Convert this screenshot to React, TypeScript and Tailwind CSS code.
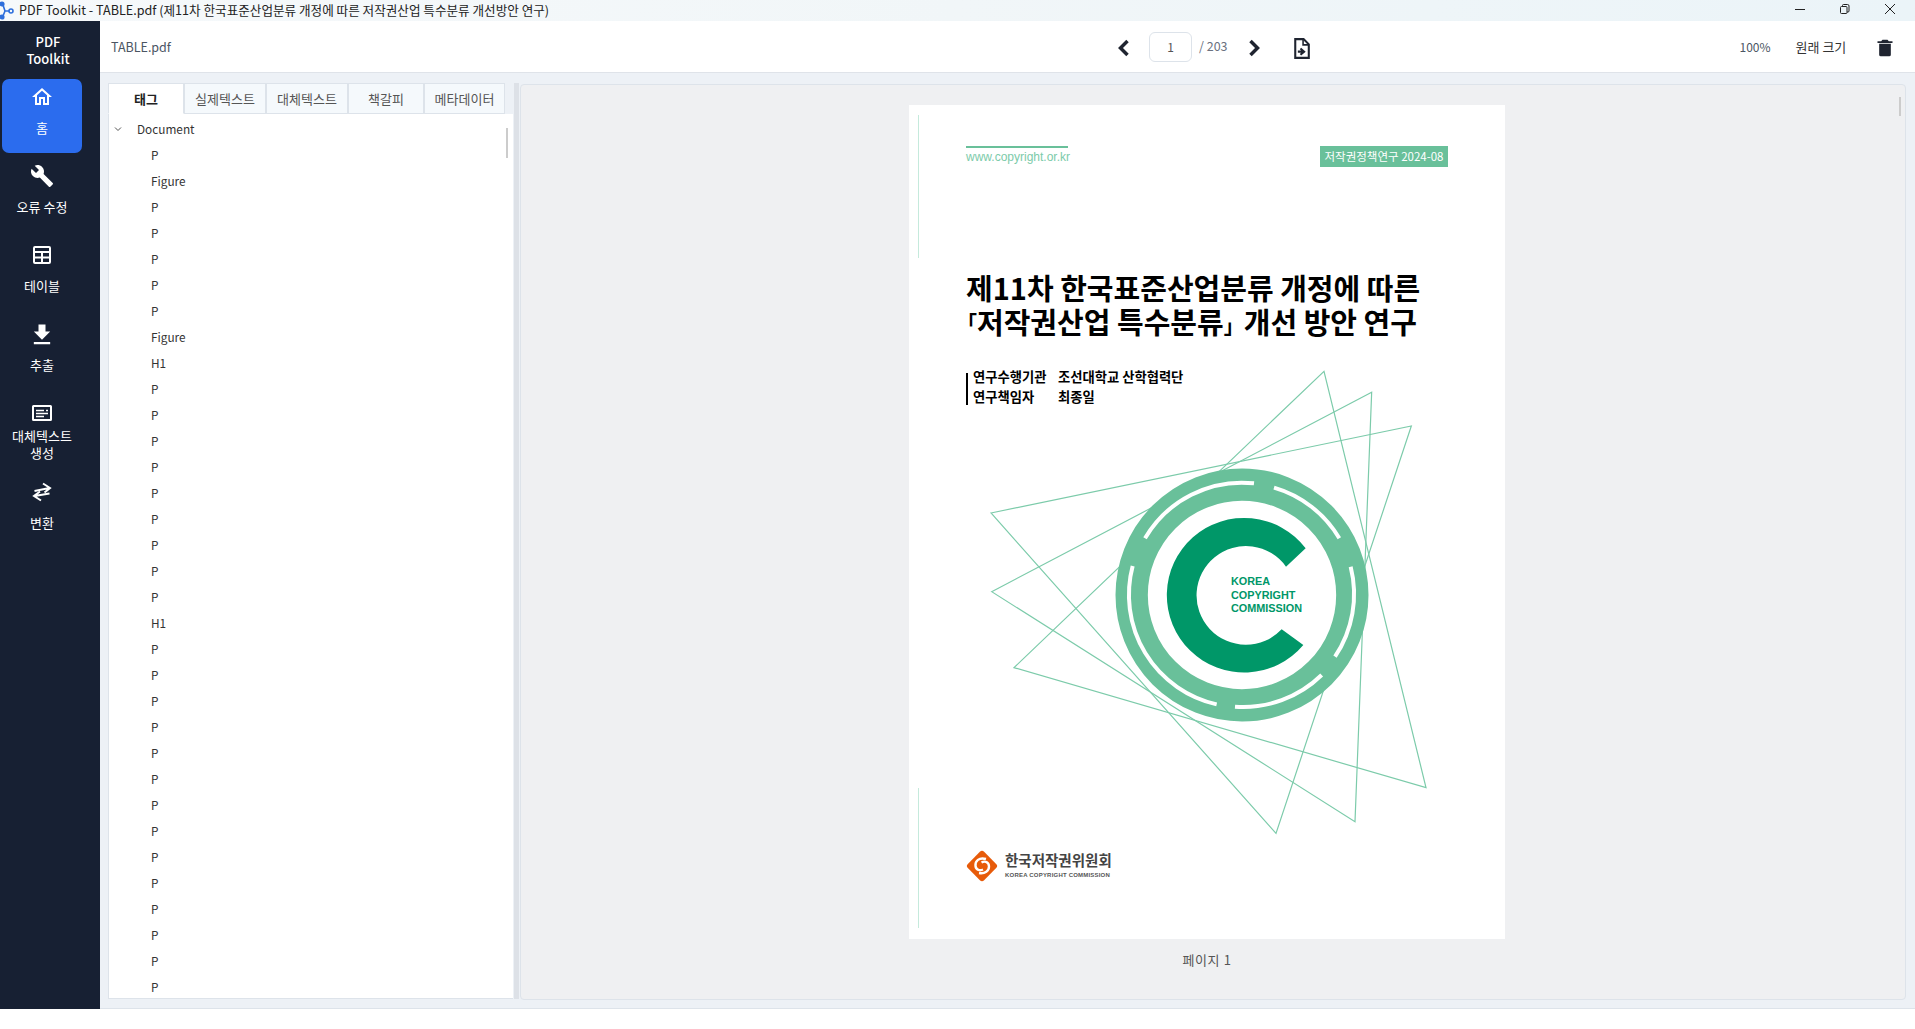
import React from 'react';
import { BiSolidChevronLeft, BiSolidChevronRight, BiSolidTrashAlt } from 'react-icons/bi';
import { MdBuild, MdFileDownload, MdOutlineHome } from 'react-icons/md';

const FONT = '[font-family:"Noto_Sans_CJK_KR","Noto_Sans",sans-serif]';

const TableIcon = () => (
  <svg width="24" height="24" viewBox="0 0 24 24" fill="none" stroke="currentColor" strokeWidth="2" className="shrink-0">
    <rect x="4" y="4" width="16" height="16" rx="1" />
    <path d="M4 9H20M4 14.5H20M12 9V20" />
  </svg>
);

const AltTextIcon = () => (
  <svg width="24" height="24" viewBox="0 0 24 24" fill="none" stroke="currentColor" className="shrink-0">
    <rect x="3" y="5" width="18" height="14" rx="0.5" strokeWidth="2" />
    <path d="M6 9.5H14M16 9.5H18M6 12.5H18M6 15.5H14" strokeWidth="1.6" />
  </svg>
);

const SwapIcon = () => (
  <svg width="24" height="24" viewBox="0 0 24 24" fill="none" stroke="currentColor" strokeWidth="2" className="shrink-0">
    <path d="M4.5 11L19.5 8M13 3.5L20 8L14.5 12.5" />
    <path d="M19.5 13.5L4.5 16M10 11.5L4 16L11 20.5" />
  </svg>
);

const NAV_ITEMS = [
  { label: '홈', icon: <MdOutlineHome size={24} className="shrink-0" />, active: true },
  { label: '오류 수정', icon: <MdBuild size={24} className="shrink-0" /> },
  { label: '테이블', icon: <TableIcon /> },
  { label: '추출', icon: <MdFileDownload size={28} className="shrink-0 -mt-[1px] -mb-[3px]" /> },
  { label: '대체텍스트\n생성', icon: <AltTextIcon />, tight: true },
  { label: '변환', icon: <SwapIcon /> },
];

const TABS = [
  { label: '태그', width: 'w-[76px]', active: true },
  { label: '실제텍스트', width: 'w-[82px]' },
  { label: '대체텍스트', width: 'w-[82px]' },
  { label: '책갈피', width: 'w-[76px]' },
  { label: '메타데이터', width: 'w-[81px]' },
];

const TREE_ROWS = [
  'P', 'Figure', 'P', 'P', 'P', 'P', 'P', 'Figure', 'H1',
  'P', 'P', 'P', 'P', 'P', 'P', 'P', 'P', 'P', 'H1',
  'P', 'P', 'P', 'P', 'P', 'P', 'P', 'P', 'P', 'P', 'P', 'P', 'P', 'P',
];

const TitleBar = () => (
  <div className="h-[21px] shrink-0 flex items-center bg-gradient-to-r from-[#f6f9fb] via-[#f1f6f8] to-[#ebf4f8] relative">
    <svg width="14" height="20" viewBox="0 0 14 20" className="shrink-0" fill="none" stroke="#2f6fdc" strokeWidth="1.6">
      <circle cx="2" cy="3" r="1.8" fill="#2f6fdc" />
      <circle cx="11" cy="10" r="2" />
      <circle cx="2" cy="16" r="1.8" fill="#2f6fdc" />
      <path d="M3 4 L5 10 L3 15 M5 10 L9 10" />
    </svg>
    <span className="ml-[5px] text-[12.6px] leading-none text-[#222] whitespace-nowrap">
      PDF Toolkit - TABLE.pdf (제11차 한국표준산업분류 개정에 따른 저작권산업 특수분류 개선방안 연구)
    </span>
    <div className="ml-auto flex items-center h-full text-[#222]">
      <svg width="10" height="10" viewBox="0 0 10 10" className="mr-[35px] -mt-[4px]" stroke="currentColor" fill="none">
        <path d="M0 5.5H10" />
      </svg>
      <svg width="10" height="10" viewBox="0 0 10 10" className="mr-[35px] -mt-[4px]" stroke="currentColor" fill="none">
        <rect x="0.5" y="2.5" width="6.5" height="7" rx="1" />
        <path d="M2.5 2.5V1.5a1 1 0 0 1 1-1h4a1.5 1.5 0 0 1 1.5 1.5v5a1 1 0 0 1-1 1H7" />
      </svg>
      <svg width="10" height="10" viewBox="0 0 10 10" className="mr-[20px] -mt-[4px]" stroke="currentColor" fill="none">
        <path d="M0 0L10 10M10 0L0 10" />
      </svg>
    </div>
  </div>
);

const Sidebar = () => (
  <div className="w-[100px] shrink-0 bg-[#172033] text-white">
    <div className="h-[58px] pt-[13px] pr-[4px] text-center text-[13px] leading-[16.5px] font-medium">
      PDF
      <br />
      Toolkit
    </div>
    <div className="w-[80px] ml-[2px] flex flex-col gap-[5px]">
      {NAV_ITEMS.map(({ label, icon, active, tight }) => (
        <div
          key={label}
          className={`h-[74px] flex flex-col items-center pt-[6px] rounded-[7px] ${active ? 'bg-[#2b6cee]' : ''} ${tight ? 'gap-[2px]' : 'gap-[10px]'}`}
        >
          {icon}
          <span className="text-[13px] leading-[17px] text-center whitespace-pre">{label}</span>
        </div>
      ))}
    </div>
  </div>
);

const Toolbar = () => (
  <div className="h-[52px] shrink-0 bg-white border-b border-[#dfe3e9] flex items-center text-[12px]">
    <span className="w-[1010px] pl-[11px] pt-[2px] text-[#4b5563] text-[12.5px]">TABLE.pdf</span>
    <BiSolidChevronLeft size={28} className="mt-[2px] text-[#1f2430]" />
    <div className="ml-[11px] w-[43px] h-[30px] rounded-[6px] border border-[#dde3ea] flex items-center justify-center text-[#555]">1</div>
    <span className="ml-[7px] text-[12.5px] text-[#6b7280]">/ 203</span>
    <BiSolidChevronRight size={28} className="ml-[12px] mt-[2px] text-[#1f2430]" />
    <svg width="25" height="25" viewBox="0 0 24 24" fill="none" stroke="#1f2430" strokeWidth="2" className="ml-[21px] mt-[4px]">
      <path d="M6 3H14L19 8V21H6Z" />
      <path d="M13.5 3V8.5H19" strokeWidth="1.5" />
      <path d="M8.5 15H13.5M11 12L14.5 15L11 18" strokeWidth="2" />
    </svg>
    <span className="ml-[426px] text-[#4b5563]">100%</span>
    <span className="ml-[25px] text-[#333] text-[13px]">원래 크기</span>
    <BiSolidTrashAlt size={20} className="ml-[29px] mt-[2px] text-[#1f2430]" />
  </div>
);

const TreePanel = () => (
  <div className="w-[405px] shrink-0 flex flex-col">
    <div className="h-[31px] shrink-0 flex">
      {TABS.map(({ label, width, active }) => (
        <div
          key={label}
          className={`${width} flex items-center justify-center pt-[1px] border border-[#dde3ea] text-[13px] ${active ? 'bg-white border-b-white font-semibold text-[#222]' : 'bg-[#f5f9fc] text-[#555]'}`}
        >
          {label}
        </div>
      ))}
    </div>
    <div className="relative flex-1 min-h-0 bg-white border-l border-b border-[#dde3ea] overflow-hidden">
      <div className="absolute left-[397px] top-[14px] w-[2px] h-[30px] bg-[#cccccc]" />
      <div className="h-[26px] mt-[2px] flex items-center text-[11.8px] text-[#333]">
        <svg width="8" height="8" viewBox="0 0 8 8" className="ml-[5px]" fill="none" stroke="#555">
          <path d="M1 2.5L4 5.5L7 2.5" />
        </svg>
        <span className="ml-[15px]">Document</span>
      </div>
      {TREE_ROWS.map((row, i) => (
        <div key={i} className="h-[26px] flex items-center pl-[42px] text-[11.8px] text-[#333]">
          {row}
        </div>
      ))}
    </div>
  </div>
);

// the cover of the pdf is a picture in the viewer, drawn here in the crop's own units
const CoverArt = () => (
  <svg width="480" height="480" viewBox="0 0 1440 1440" className="absolute left-[51px] top-[255px]" fill="none">
    <g stroke="#7ccbaa" strokeWidth="3.6">
      <path d="M93 459L1354 198L948 1420Z" />
      <path d="M95 695L1235 97L1185 1385Z" />
      <path d="M162 923L1092 34L1398 1283Z" />
    </g>
    <circle cx="846" cy="705" r="331" fill="#ffffff" stroke="#69c09a" strokeWidth="97" />
    <g stroke="#ffffff" strokeWidth="12">
      <path d="M555 535A337 337 0 0 1 882 370" />
      <path d="M942 383A337 337 0 0 1 1138 535" />
      <path d="M1172 620A337 337 0 0 1 1125 890" />
      <path d="M1085 945A337 337 0 0 1 825 1040" />
      <path d="M770 1033A337 337 0 0 1 518 618" />
    </g>
    <path d="M1037 565A232 232 0 1 0 1030 855L965 808A148 148 0 1 1 978 620Z" fill="#009768" />
    <g fill="#009768" fontFamily="'Liberation Sans',sans-serif" fontWeight="700" fontSize="32.5">
      <text x="813" y="676">KOREA</text>
      <text x="813" y="716">COPYRIGHT</text>
      <text x="813" y="756">COMMISSION</text>
    </g>
  </svg>
);

const PdfPage = () => (
  <div className="relative w-[596px] h-[834px] shrink-0 bg-white flex flex-col pl-[57px] pr-[57px] pt-[41px] text-black">
    <div className="absolute left-[9px] top-[10px] w-[1px] h-[143px] bg-[#c5eadc]" />
    <div className="absolute left-[9px] top-[683px] w-[1px] h-[140px] bg-[#c5eadc]" />
    <CoverArt />
    <div className="flex justify-between items-start">
      <div className="w-[102px] border-t-2 border-[#69c09a] pt-[1px] text-[12px] leading-[16px] text-[#7ccbaa] whitespace-nowrap [font-family:'Liberation_Sans',sans-serif]">
        www.copyright.or.kr
      </div>
      <div className="w-[128px] h-[21px] bg-[#69c09a] text-white text-[11.5px] flex items-center justify-center whitespace-nowrap">
        저작권정책연구 2024-08
      </div>
    </div>
    <div className="mt-[103px] text-[29px] leading-[34px] font-bold whitespace-nowrap">
      제11차 한국표준산업분류 개정에 따른
      <br />
      <span className="text-[20px] -ml-[9px] align-[3px]">「</span>저작권산업 특수분류<span className="text-[20px]">」</span>개선 방안 연구
    </div>
    <div className="relative z-10 mt-[30px] h-[32px] pl-[5px] border-l-2 border-black w-fit">
      <div className="-mt-[6px] grid grid-cols-[85px_auto] text-[13.3px] leading-[20px] font-semibold whitespace-nowrap">
        <span>연구수행기관</span>
        <span>조선대학교 산학협력단</span>
        <span>연구책임자</span>
        <span>최종일</span>
      </div>
    </div>
    <div className="mt-[445px] flex items-center gap-[7px]">
      <svg width="32" height="32" viewBox="0 0 32 32" className="shrink-0" fill="none">
        <rect x="4.5" y="4.5" width="23" height="23" rx="3" transform="rotate(45 16 16)" fill="#e75b0a" />
        <path d="M20 9C13 7 9 11 9.5 16C10 20 14 21 17 19.5" stroke="#ffffff" strokeWidth="2.4" />
        <path d="M15.5 12.5C19 10.5 23 12 23 16.5C23 21 19 24 13 23" stroke="#ffffff" strokeWidth="2.4" />
      </svg>
      <div className="flex flex-col -mt-[3px]">
        <span className="mb-[3px] text-[14.5px] leading-[17px] font-semibold text-[#444] whitespace-nowrap">한국저작권위원회</span>
        <span className="text-[6px] leading-[8px] font-bold text-[#555] tracking-[0.2px] whitespace-nowrap [font-family:'Liberation_Sans',sans-serif]">
          KOREA COPYRIGHT COMMISSION
        </span>
      </div>
    </div>
  </div>
);

const Viewer = () => (
  <div className="relative ml-[1px] mt-[1px] w-[1386px] h-[916px] shrink-0 rounded-[4px] border border-[#dde3ea] bg-[#eff0f2] flex flex-col items-center pt-[20px] pr-[12px] overflow-hidden">
    <div className="absolute left-[1378px] top-[12px] w-[2px] h-[19px] bg-[#cccccc]" />
    <PdfPage />
    <div className="mt-[12px] text-[13px] leading-[18px] tracking-[0.6px] text-[#555]">페이지 1</div>
  </div>
);

export default function App() {
  return (
    <div className={`w-[1915px] h-[1029px] overflow-hidden bg-white flex flex-col ${FONT}`}>
      <TitleBar />
      <div className="h-[988px] shrink-0 flex">
        <Sidebar />
        <div className="flex-1 min-w-0 flex flex-col bg-[#edf1f6] border-b border-[#dde3ea]">
          <Toolbar />
          <div className="flex-1 min-h-0 flex pt-[10px] pl-[8px] pb-[9px]">
            <TreePanel />
            <div className="ml-[1px] w-[5px] shrink-0 bg-[#dde1e7]" />
            <Viewer />
          </div>
        </div>
      </div>
    </div>
  );
}
